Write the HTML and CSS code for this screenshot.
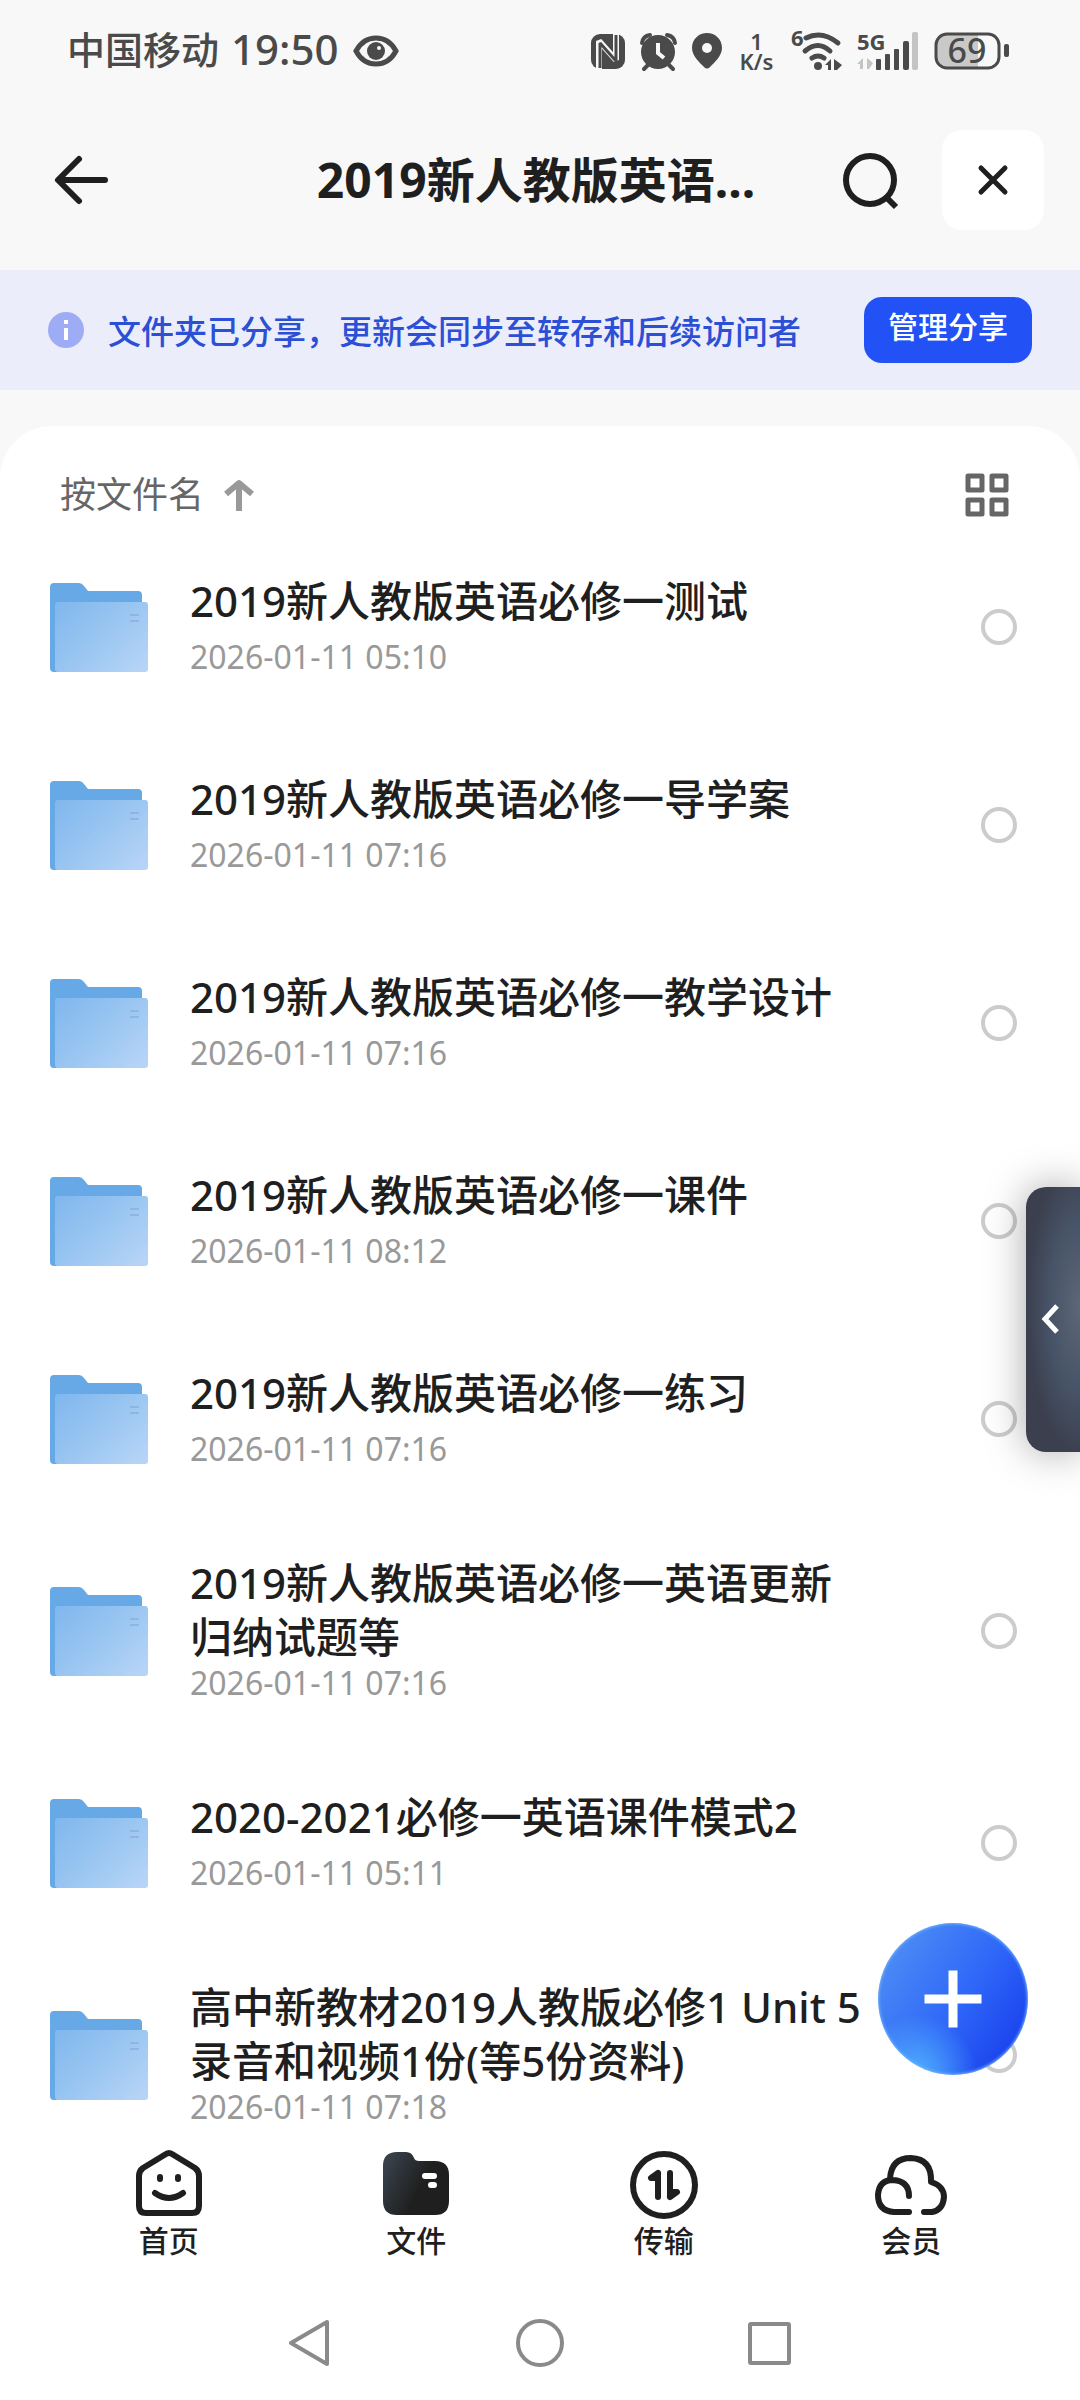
FILE: index.html
```html
<!DOCTYPE html>
<html lang="zh-CN">
<head>
<meta charset="utf-8">
<meta name="viewport" content="width=device-width, initial-scale=1">
<title>2019新人教版英语</title>
<link rel="stylesheet" href="styles.css">
</head>
<body>
<svg class="defs" aria-hidden="true">
  <defs>
    <linearGradient id="front" x1="0" y1="0.1" x2="1" y2="0.9">
      <stop offset="0" stop-color="#82b8ee"/>
      <stop offset="0.5" stop-color="#9ac6f1"/>
      <stop offset="1" stop-color="#b7d4f7"/>
    </linearGradient>
    <linearGradient id="ink" x1="0" y1="0.2" x2="0.6" y2="0.5">
      <stop offset="0" stop-color="#39424c"/>
      <stop offset="1" stop-color="#1f1f1f"/>
    </linearGradient>
    <symbol id="folder" viewBox="0 0 98 90">
      <path d="M4 1H29Q32 1 34 4L38 9H88Q92 9 92 13V30H10V90H4Q0 90 0 86V5Q0 1 4 1Z" fill="#67a9e6"/>
      <rect x="5" y="20" width="93" height="70" rx="3" fill="url(#front)"/>
      <path d="M80 33H89M80 39H89" stroke="#8fb5e2" stroke-width="2"/>
    </symbol>
  </defs>
</svg>
<div class="app">
  <div class="status">
    <div class="status-left">
      <span class="carrier">中国移动</span>
      <span class="clock">19:50</span>
      <svg class="eye" width="46" height="32" viewBox="0 0 46 32">
        <path d="M3 16Q10 3 23 3T43 16Q36 29 23 29T3 16Z" fill="none" stroke="#4a4a4a" stroke-width="5"/>
        <circle cx="23" cy="16" r="9" fill="#4a4a4a"/><circle cx="26" cy="13" r="2" fill="#f8f8f8"/>
      </svg>
    </div>
    <div class="status-right">
      <svg width="34" height="38" viewBox="0 0 34 38">
        <rect x="0" y="2" width="34" height="35" rx="9" fill="#4a4a4a"/>
        <path d="M8 38V9L25 28V1" fill="none" stroke="#f8f8f8" stroke-width="6" stroke-linejoin="bevel"/>
        <path d="M9 36V11L25 29V3" fill="none" stroke="#4a4a4a" stroke-width="3" stroke-linejoin="bevel"/>
      </svg>
      <svg width="37" height="38" viewBox="0 0 37 38">
        <circle cx="18" cy="20" r="17" fill="#4a4a4a"/>
        <path d="M2 11Q3 4 10 3M35 11Q34 4 27 3M8 33L4 37M29 33L33 37" stroke="#4a4a4a" stroke-width="4" fill="none" stroke-linecap="round"/>
        <path d="M18 11V21L24 26" stroke="#f8f8f8" stroke-width="4" fill="none"/>
      </svg>
      <svg width="30" height="38" viewBox="0 0 30 38">
        <path d="M15 1C7 1 0 7 0 16C0 24 8 31 12 35Q15 38 18 35C22 31 30 24 30 16C30 7 23 1 15 1Z" fill="#4a4a4a"/><circle cx="15" cy="16" r="5" fill="#f8f8f8"/>
      </svg>
      <div class="speed"><span>1</span><span>K/s</span></div>
      <svg width="51" height="38" viewBox="0 0 51 38">
        <text x="0" y="14" class="tiny">6</text>
        <g fill="none" stroke="#4a4a4a" stroke-width="5" stroke-linecap="round">
          <path d="M15 6Q31 -2 47 11M14 19Q27 8 39 19M21 26Q27 22 33 26"/>
        </g>
        <circle cx="27" cy="34" r="4" fill="#4a4a4a"/>
        <path d="M34 33L40 27V38H37V33ZM43 27L51 33L46 38H43Z" fill="#4a4a4a"/>
      </svg>
      <svg width="62" height="38" viewBox="0 0 62 38">
        <text x="0" y="18" class="tiny">5G</text>
        <path d="M0 32L6 26V37H3V32ZM10 26L16 31L12 37H10Z" fill="#c4c4c4"/>
        <g fill="#4a4a4a"><rect x="19" y="27" width="5" height="11" rx="1"/><rect x="28" y="22" width="5" height="16" rx="1"/><rect x="37" y="17" width="5" height="21" rx="1"/><rect x="46" y="9" width="6" height="29" rx="2"/></g>
        <rect x="55" y="0" width="6" height="38" rx="2" fill="#c4c4c4"/>
      </svg>
      <svg width="75" height="38" viewBox="0 0 75 38">
        <path d="M44 3V35H12Q3 35 3 26V12Q3 3 12 3Z" fill="#c9c9c9"/>
        <rect x="2" y="2" width="63" height="34" rx="11" fill="none" stroke="#4a4a4a" stroke-width="3"/>
        <rect x="70" y="12" width="5" height="13" rx="2" fill="#4a4a4a"/>
        <text x="33" y="31" text-anchor="middle" class="charge">69</text>
      </svg>
    </div>
  </div>

  <header class="header">
    <button class="icon-btn" aria-label="返回">
      <svg width="56" height="50" viewBox="0 0 56 50" fill="none" stroke="#1f1f1f" stroke-width="6" stroke-linecap="round" stroke-linejoin="round"><path d="M27 4L6 25L27 46M7 25H53"/></svg>
    </button>
    <h1 class="title">2019新人教版英语...</h1>
    <button class="icon-btn search" aria-label="搜索">
      <svg width="58" height="58" viewBox="0 0 58 58" fill="none" stroke="#1f1f1f" stroke-width="6"><circle cx="28" cy="29" r="24"/><path d="M44 46L54 56"/></svg>
    </button>
    <button class="icon-btn close" aria-label="关闭">
      <svg width="32" height="32" viewBox="0 0 32 32" fill="none" stroke="#1f1f1f" stroke-width="5" stroke-linecap="round"><path d="M4 4L28 28M28 4L4 28"/></svg>
    </button>
  </header>

  <section class="notice">
    <svg width="36" height="36" viewBox="0 0 36 36"><circle cx="18" cy="18" r="18" fill="#9dacf4"/><path d="M16 8H20V12H16ZM16 16H20V28H16Z" fill="#fff"/></svg>
    <p class="notice-text">文件夹已分享，更新会同步至转存和后续访问者</p>
    <button class="manage">管理分享</button>
  </section>

  <main class="panel">
    <div class="toolbar">
      <button class="sort">按文件名
        <svg width="30" height="32" viewBox="0 0 30 32" fill="none" stroke="#999" stroke-width="6" stroke-linejoin="round"><path d="M15 32V4M2 15L15 4L28 15"/></svg>
      </button>
      <button class="icon-btn" aria-label="网格视图">
        <svg width="44" height="44" viewBox="0 0 44 44" fill="none" stroke="#666" stroke-width="5" stroke-linejoin="round"><path d="M3 3H17V17H3ZM27 3H41V17H27ZM3 27H17V41H3ZM27 27H41V41H27Z"/></svg>
      </button>
    </div>
    <ul class="files">
      <li class="file"><svg class="folder"><use href="#folder"/></svg><div class="info"><label class="name" for="f1">2019新人教版英语必修一测试</label><time class="date">2026-01-11 05:10</time></div><input class="pick" type="checkbox" id="f1"></li>
      <li class="file"><svg class="folder"><use href="#folder"/></svg><div class="info"><label class="name" for="f2">2019新人教版英语必修一导学案</label><time class="date">2026-01-11 07:16</time></div><input class="pick" type="checkbox" id="f2"></li>
      <li class="file"><svg class="folder"><use href="#folder"/></svg><div class="info"><label class="name" for="f3">2019新人教版英语必修一教学设计</label><time class="date">2026-01-11 07:16</time></div><input class="pick" type="checkbox" id="f3"></li>
      <li class="file"><svg class="folder"><use href="#folder"/></svg><div class="info"><label class="name" for="f4">2019新人教版英语必修一课件</label><time class="date">2026-01-11 08:12</time></div><input class="pick" type="checkbox" id="f4"></li>
      <li class="file"><svg class="folder"><use href="#folder"/></svg><div class="info"><label class="name" for="f5">2019新人教版英语必修一练习</label><time class="date">2026-01-11 07:16</time></div><input class="pick" type="checkbox" id="f5"></li>
      <li class="file"><svg class="folder"><use href="#folder"/></svg><div class="info"><label class="name" for="f6">2019新人教版英语必修一英语更新归纳试题等</label><time class="date">2026-01-11 07:16</time></div><input class="pick" type="checkbox" id="f6"></li>
      <li class="file"><svg class="folder"><use href="#folder"/></svg><div class="info"><label class="name" for="f7">2020-2021必修一英语课件模式2</label><time class="date">2026-01-11 05:11</time></div><input class="pick" type="checkbox" id="f7"></li>
      <li class="file"><svg class="folder"><use href="#folder"/></svg><div class="info"><label class="name" for="f8">高中新教材2019人教版必修1 Unit 5录音和视频1份(等5份资料)</label><time class="date">2026-01-11 07:18</time></div><input class="pick" type="checkbox" id="f8"></li>
    </ul>
  </main>

  <nav class="tabs">
    <a class="tab" href="#home">
      <svg width="74" height="72" viewBox="0 0 74 72" fill="none" stroke="#1f1f1f" stroke-width="6" stroke-linecap="round" stroke-linejoin="round"><path d="M34 5Q37 3 40 5L63 19Q67 22 67 27V57Q67 64 60 64H14Q7 64 7 57V27Q7 22 11 19Z"/><path d="M28 28V30M46 28V30"/><path d="M23 44Q37 54 51 44"/></svg>
      <span>首页</span>
    </a>
    <a class="tab" href="#files" aria-current="page">
      <svg width="74" height="72" viewBox="0 0 74 72"><path d="M18 3H27Q33 3 35 9Q36 12 40 12H56Q70 12 70 26V52Q70 66 56 66H18Q4 66 4 52V17Q4 3 18 3Z" fill="url(#ink)"/><path d="M46 27H55M52 36H55" stroke="#fff" stroke-width="6" stroke-linecap="round"/></svg>
      <span>文件</span>
    </a>
    <a class="tab" href="#transfer">
      <svg width="74" height="72" viewBox="0 0 74 72" fill="none" stroke="#1f1f1f" stroke-width="6" stroke-linecap="round" stroke-linejoin="round"><circle cx="37" cy="36" r="31"/><path d="M31 24V48M31 24L24 29H31M43 24V48M43 48L50 43H43"/></svg>
      <span>传输</span>
    </a>
    <a class="tab" href="#member">
      <svg width="74" height="72" viewBox="0 0 74 72" fill="none" stroke="#1f1f1f" stroke-width="6" stroke-linecap="round" stroke-linejoin="round"><path d="M35 63H20Q4 62 4 46Q5 31 19 31Q35 32 35 47M16 30Q17 9 37 9Q58 10 57 33Q70 37 70 48Q69 61 58 63H50"/></svg>
      <span>会员</span>
    </a>
  </nav>

  <div class="sysnav">
    <button class="icon-btn" aria-label="系统返回"><svg width="50" height="50" viewBox="0 0 50 50" class="outline"><path d="M6 25L42 4V46Z"/></svg></button>
    <button class="icon-btn" aria-label="主屏幕"><svg width="50" height="50" viewBox="0 0 50 50" class="outline"><circle cx="25" cy="25" r="22"/></svg></button>
    <button class="icon-btn" aria-label="最近任务"><svg width="50" height="50" viewBox="0 0 50 50" class="outline"><rect x="5" y="6" width="39" height="39" rx="1"/></svg></button>
  </div>

  <button class="drawer" aria-label="展开侧栏"><svg width="18" height="32" viewBox="0 0 18 32" fill="none" stroke="#fff" stroke-width="5"><path d="M16 2L4 15L16 28"/></svg></button>
  <button class="fab" aria-label="添加"><svg width="58" height="58" viewBox="0 0 58 58" stroke="#fff" stroke-width="9" stroke-linecap="square"><path d="M29 5V53M5 29H53"/></svg></button>
</div>
</body>
</html>
```
FILE: styles.css
```css
* { box-sizing: border-box; }

body {
  margin: 0;
  color: #1f1f1f;
  background: #f8f8f8;
  font-family: "Noto Sans", "Noto Sans CJK SC", sans-serif;
}

button {
  padding: 0;
  border: 0;
  background: none;
  color: inherit;
  font: inherit;
}

svg { display: block; flex: none; overflow: visible; }

.defs { position: absolute; width: 0; height: 0; }

.app {
  position: relative;
  display: flex;
  flex-direction: column;
  height: 100vh;
  overflow: hidden;
}

/* Status bar */
.status {
  display: flex;
  flex: none;
  align-items: center;
  justify-content: space-between;
  height: 102px;
  padding: 0 71px 0 67px;
  color: #4a4a4a;
}

.status-left, .status-right { display: flex; align-items: center; }
.status-right { gap: 15px; }

.carrier, .clock { padding-bottom: 4px; font-weight: 500; line-height: 48px; }
.carrier { font-size: 38px; }
.clock { margin: 0 14px 0 12px; font-size: 42px; }

.speed {
  display: flex;
  flex-direction: column;
  align-items: center;
  width: 39px;
  font-size: 22px;
  font-weight: 600;
  line-height: 20px;
}

.tiny { fill: #4a4a4a; font-size: 22px; font-weight: 700; }
.charge { fill: #4a4a4a; font-size: 34px; font-weight: 500; }

/* Header */
.header {
  display: flex;
  flex: none;
  align-items: center;
  height: 168px;
  padding: 0 36px 12px 52px;
}

.icon-btn { display: flex; align-items: center; justify-content: center; }

.title {
  flex: 1;
  margin: 0;
  padding-left: 122px;
  font-size: 48px;
  font-weight: 700;
  line-height: 60px;
  text-align: center;
  white-space: nowrap;
}

.search { margin-right: 42px; }
.close { width: 102px; height: 100px; border-radius: 20px; background: #fff; }

/* Share notice */
.notice {
  display: flex;
  flex: none;
  align-items: center;
  height: 120px;
  padding: 0 48px;
  background: #ecedfb;
}

.notice-text {
  flex: 1;
  margin: 0 0 0 24px;
  padding-top: 4px;
  color: #2b50d6;
  font-size: 33px;
  font-weight: 500;
  line-height: 48px;
}

.manage {
  width: 168px;
  height: 66px;
  padding-bottom: 6px;
  border-radius: 18px;
  background: #2252f5;
  color: #fff;
  font-size: 30px;
  font-weight: 500;
  line-height: 44px;
}

/* File list */
.panel {
  flex: 1;
  min-height: 0;
  margin-top: 36px;
  overflow-y: auto;
  scrollbar-width: none;
  border-radius: 52px 52px 0 0;
  background: #fff;
}

.toolbar {
  display: flex;
  align-items: center;
  justify-content: space-between;
  height: 102px;
  padding: 36px 71px 0 60px;
}

.sort {
  display: flex;
  align-items: center;
  gap: 20px;
  color: #666;
  font-size: 36px;
  line-height: 48px;
}

.files { margin: 0; padding: 0; list-style: none; }

.file {
  display: flex;
  align-items: center;
  min-height: 198px;
  padding: 38px 63px 38px 50px;
}

.folder { width: 98px; height: 90px; }

.info {
  display: flex;
  flex: 1;
  flex-direction: column;
  justify-content: space-between;
  min-height: 102px;
  margin: 0 112px 4px 42px;
}

.name { font-size: 42px; font-weight: 500; line-height: 54px; }
.date { color: #999; font-size: 32px; line-height: 38px; }

.pick {
  flex: none;
  width: 36px;
  height: 36px;
  margin: 0;
  appearance: none;
  border: 4px solid #ccc;
  border-radius: 50%;
}

/* Bottom bars */
.tabs {
  display: flex;
  flex: none;
  height: 130px;
  padding: 9px 45px 0;
  background: #fff;
}

.tab {
  display: flex;
  flex: 1;
  flex-direction: column;
  align-items: center;
  color: inherit;
  font-size: 30px;
  font-weight: 500;
  line-height: 40px;
  text-decoration: none;
}

.sysnav {
  display: flex;
  flex: none;
  align-items: center;
  justify-content: center;
  gap: 180px;
  height: 130px;
  padding-top: 16px;
  background: #fff;
}

.outline { fill: none; stroke: #8a8a8a; stroke-width: 4; stroke-linejoin: round; }

/* Floating controls */
.drawer {
  position: absolute;
  top: 1187px;
  right: 0;
  display: flex;
  align-items: center;
  width: 54px;
  height: 265px;
  padding-left: 15px;
  border-radius: 20px 0 0 20px;
  background: radial-gradient(ellipse 54px 150px at 100% 45%, #5c6879, #465265 60%, #3b3f4e);
  box-shadow: 0 0 40px rgba(0, 0, 0, 0.35);
}

.fab {
  position: absolute;
  right: 52px;
  bottom: 325px;
  display: flex;
  align-items: center;
  justify-content: center;
  width: 150px;
  height: 152px;
  border-radius: 50%;
  background:
    radial-gradient(circle at 26% 100%, rgba(90, 195, 255, 0.8), rgba(70, 140, 250, 0) 32%),
    linear-gradient(125deg, #4d8df5 10%, #2e66f8 55%, #1c45ee 85%);
  box-shadow: inset 0 0 3px 1px #6fb4fb;
}
```
